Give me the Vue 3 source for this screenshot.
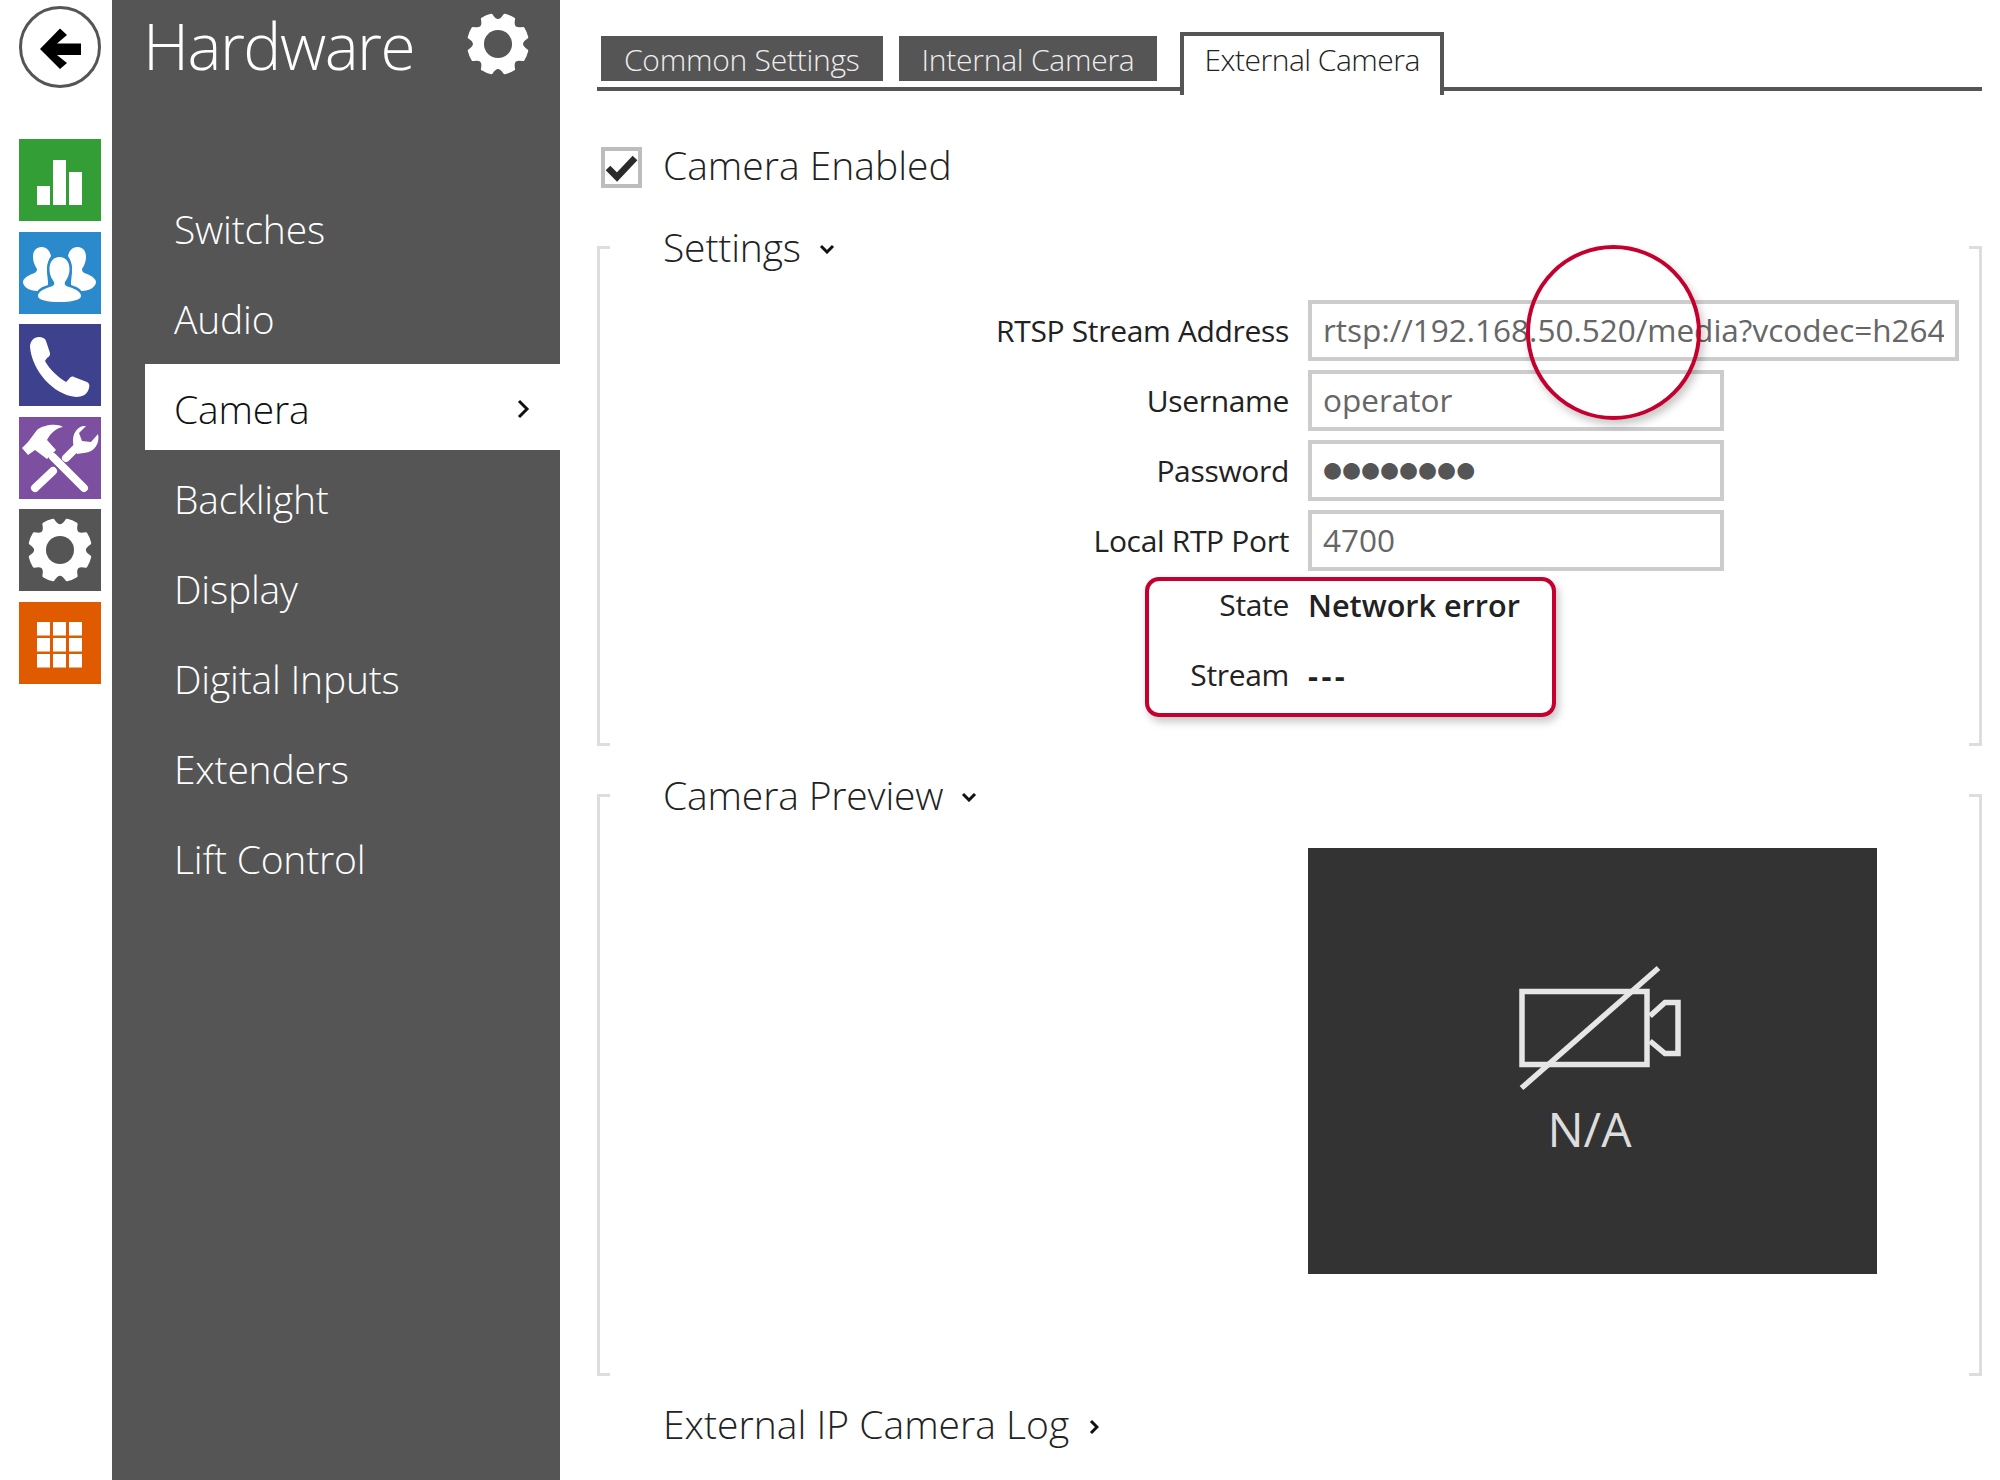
<script setup>
const tiles = ['green', 'blue', 'navy', 'purple', 'gray', 'orange']
const menu = ['Switches', 'Audio', 'Camera', 'Backlight', 'Display', 'Digital Inputs', 'Extenders', 'Lift Control']
const grid = [18, 34, 50].flatMap((x) => [20, 36, 52].map((y) => ({ x, y })))

function gearPath() {
  const R = 30.5, N = 19, d = (13 * Math.PI) / 180
  let p = ''
  for (let k = 0; k < 8; k++) {
    const t = (k * Math.PI) / 4 - Math.PI / 2
    const a = [32 + R * Math.cos(t - d), 32 + R * Math.sin(t - d)]
    const c = [32 + N * Math.cos(t), 32 + N * Math.sin(t)]
    const b = [32 + R * Math.cos(t + d), 32 + R * Math.sin(t + d)]
    p += k === 0 ? `M${a[0].toFixed(2)} ${a[1].toFixed(2)}` : `A${R} ${R} 0 0 1 ${a[0].toFixed(2)} ${a[1].toFixed(2)}`
    p += `Q${c[0].toFixed(2)} ${c[1].toFixed(2)} ${b[0].toFixed(2)} ${b[1].toFixed(2)}`
  }
  const s = (-Math.PI / 2) - d
  return p + `A${R} ${R} 0 0 1 ${(32 + R * Math.cos(s)).toFixed(2)} ${(32 + R * Math.sin(s)).toFixed(2)}Z`
}
const gear = gearPath()
</script>

<template>
  <div class="page">
    <nav class="rail">
      <div class="back">
        <svg viewBox="0 0 76 76" width="76" height="76"><polygon points="18,40 38,19.500 45,26 35,34.500 59,34.500 59,46 35,46 45,54 38,60" fill="#000" /></svg>
      </div>
      <div class="tiles">
        <div v-for="t in tiles" :key="t" class="tile" :class="t">
          <svg v-if="t === 'green'" viewBox="0 0 82 82">
            <rect x="18" y="47" width="13" height="19" /><rect x="34" y="21" width="13" height="45" /><rect x="50" y="33" width="13" height="33" />
          </svg>
          <svg v-else-if="t === 'blue'" viewBox="0 0 82 82">
            <path d="M22.500 15C17 15 14 19 14 25C14 30 16 34 18 37C18 39 17 41 13 42C8 44 4 47 4 50C4 55 11 59 18 59C22 59 26 58 29 56L29 50L28 40C28 34 29 28 32 24C31 19 28 15 22.500 15Z" />
            <path d="M58.500 15C64 15 67 19 67 25C67 30 65 34 63 37C63 39 64 41 68 42C73 44 77 47 77 50C77 55 70 59 63 59C59 59 55 58 52 56L52 50L53 40C53 34 52 28 49 24C50 19 53 15 58.500 15Z" />
            <path class="person" d="M40.500 25C34 25 30.500 30 30.500 37C30.500 43 33 47 35 50C36 53 34 54 31 55C24 57 19 60 19 64C19 68 29 70 40.500 70C52 70 62 68 62 64C62 60 57 57 50 55C47 54 45 53 46 50C48 47 50.500 43 50.500 37C50.500 30 47 25 40.500 25Z" />
          </svg>
          <svg v-else-if="t === 'navy'" viewBox="0 0 82 82">
            <path d="M11 23C11 17 15 13 20 13C23 13 26 14 27 17L31 29C31.500 31 30 33 28 34L26 37C31 46 39 53 47 58L50 55C51 53 53 52 55 53L68 58C70 59 71 61 70 64C69 69 65 73 57 73C34 71 13 46 11 23Z" />
          </svg>
          <svg v-else-if="t === 'purple'" viewBox="0 0 82 82">
            <path d="M3 31L9 38L16 33L28 42L37 33L28 23C32 15 38 11 44 10C38 6 24 8 18 13L9 25Z" />
            <path class="bar" d="M34 40L65 71" />
            <path class="bar" d="M16 71L34 54" />
            <path class="bar" d="M47 41L58 30" />
            <path d="M55 30C52 20 56 11 64 9L67 9L60 16L63 24L72 25L79 17C81 26 76 35 65 36C62 36 60 37 58 37Z" />
          </svg>
          <svg v-else-if="t === 'gray'" viewBox="0 0 82 82">
            <g transform="translate(9 9)"><path class="gear" :d="gear" /><circle cx="32" cy="32" r="14" fill="#555" /></g>
          </svg>
          <svg v-else viewBox="0 0 82 82">
            <rect v-for="c in grid" :key="c.x + '-' + c.y" :x="c.x" :y="c.y" width="13" height="13.5" />
          </svg>
        </div>
      </div>
    </nav>

    <aside class="sidebar">
      <header class="side-head">
        <h1>Hardware</h1>
        <svg class="side-gear" viewBox="0 0 64 64"><path class="gear" :d="gear" /><circle cx="32" cy="32" r="14.500" fill="#555" /></svg>
      </header>
      <ul class="menu">
        <li v-for="m in menu" :key="m" :class="{ active: m === 'Camera' }">
          <span>{{ m }}</span>
          <svg v-if="m === 'Camera'" class="chev-r" viewBox="0 0 14 22"><path d="M3 3l8 8-8 8" /></svg>
        </li>
      </ul>
    </aside>

    <main class="main">
      <div class="tabs">
        <div class="tab">Common Settings</div>
        <div class="tab">Internal Camera</div>
        <div class="tab current">External Camera</div>
      </div>

      <label class="check">
        <span class="box"><svg viewBox="0 0 41 41"><path d="M7 21l9 9 18-19" /></svg></span>
        <span class="check-text">Camera Enabled</span>
      </label>

      <section class="sec first">
        <h2>Settings <svg class="chev-d" viewBox="0 0 16 10"><path d="M2 2l6 6 6-6" /></svg></h2>
        <div class="form">
          <label>RTSP Stream Address</label>
          <input class="long" readonly value="rtsp://192.168.50.520/media?vcodec=h264" />
          <label>Username</label>
          <input readonly value="operator" />
          <label>Password</label>
          <input class="dots" readonly value="●●●●●●●●" />
          <label>Local RTP Port</label>
          <input readonly value="4700" />
          <label class="st">State</label>
          <div class="st strong">Network error</div>
          <label class="st">Stream</label>
          <div class="st dashes">---</div>
        </div>
      </section>

      <section class="sec second">
        <h2>Camera Preview <svg class="chev-d" viewBox="0 0 16 10"><path d="M2 2l6 6 6-6" /></svg></h2>
        <div class="preview">
          <svg viewBox="0 0 180 130" width="180" height="130">
            <rect x="19" y="28.500" width="125" height="73" class="cam" />
            <path class="cam" d="M147 53L162 39.500H175V90.500H162L147 78" />
            <path class="cam" d="M18.500 125L155.500 5" />
          </svg>
          <div class="na">N/A</div>
        </div>
      </section>

      <h2 class="log">External IP Camera Log <svg class="chev-rs" viewBox="0 0 10 16"><path d="M2 2l6 6-6 6" /></svg></h2>
    </main>

    <div class="note-circle"></div>
    <div class="note-rect"></div>
  </div>
</template>

<style scoped>
.page {
  position: relative;
  display: flex;
  width: 2000px;
  height: 1480px;
  overflow: hidden;
  background: #fff;
  font-family: "Open Sans", "Liberation Sans", sans-serif;
  color: #222;
}

/* rail */
.rail {
  width: 112px;
  flex: none;
  padding: 6px 0 0 19px;
  box-sizing: border-box;
}
.back {
  width: 82px;
  height: 82px;
  box-sizing: border-box;
  border: 3px solid #555;
  border-radius: 50%;
}
.back svg { display: block; }
.tiles {
  margin-top: 51px;
  display: flex;
  flex-direction: column;
  gap: 10.6px;
}
.tile { width: 82px; height: 82px; }
.tile svg { display: block; width: 82px; height: 82px; fill: #fff; }
.green { background: #339e35; }
.blue { background: #2b8acb; }
.navy { background: #3e418d; }
.purple { background: #7d4fa0; }
.gray { background: #555; }
.orange { background: #e05a00; }
.person { stroke: #2b8acb; stroke-width: 5; paint-order: stroke; }
.bar { fill: none; stroke: #fff; stroke-width: 8; stroke-linecap: round; }
.gear { fill: #fff; stroke: #fff; stroke-width: 3; stroke-linejoin: round; }

/* sidebar */
.sidebar {
  width: 448px;
  flex: none;
  background: #555;
  color: #fff;
}
.side-head {
  height: 184px;
  box-sizing: border-box;
  display: flex;
  align-items: flex-start;
  justify-content: space-between;
  padding: 0 31px 0 31px;
}
h1 {
  margin: 2px 0 0;
  font-size: 64px;
  font-weight: 300;
  line-height: 88px;
  letter-spacing: -1.5px;
}
.side-gear { width: 62px; height: 62px; margin-top: 13px; }
.menu {
  list-style: none;
  margin: 0;
  padding: 0 0 0 33px;
}
.menu li {
  height: 86px;
  margin-bottom: 4px;
  box-sizing: border-box;
  display: flex;
  align-items: center;
  justify-content: space-between;
  padding: 3px 30px 0 29px;
  font-size: 39px;
  font-weight: 300;
  letter-spacing: -0.2px;
}
.menu li.active { background: #fff; color: #111; }
.chev-r { width: 14px; height: 22px; }
.chev-r path, .chev-d path, .chev-rs path { fill: none; stroke: #111; stroke-width: 3; }

/* main */
.main {
  flex: 1;
  min-width: 0;
  padding: 0 18px 0 37px;
}
.tabs {
  height: 91px;
  box-sizing: border-box;
  border-bottom: 4px solid #555;
  display: flex;
  align-items: flex-start;
  gap: 16px;
  padding: 36px 0 0 4px;
}
.tab {
  height: 45px;
  padding: 0 23px;
  background: #555;
  color: #eee;
  font-size: 30px;
  font-weight: 300;
  line-height: 47px;
  letter-spacing: -0.25px;
}
.tab.current {
  height: 59px;
  margin: -4px 0 0 7px;
  padding: 0 20px;
  background: #fff;
  color: #222;
  border: 4px solid #555;
  border-bottom: 0;
  line-height: 47px;
  letter-spacing: -0.5px;
}
.check {
  display: flex;
  align-items: center;
  gap: 21px;
  margin: 56px 0 38px 4px;
  height: 41px;
  font-size: 39px;
  font-weight: 300;
}
.check-text { margin-bottom: 6px; }
.box {
  width: 41px;
  height: 41px;
  box-sizing: border-box;
  border: 4px solid #bdbdbd;
  position: relative;
}
.box svg { position: absolute; left: -4px; top: -4px; width: 41px; height: 41px; }
.box path { fill: none; stroke: #2a2a2a; stroke-width: 6.5; }

.sec { position: relative; }
.sec::before, .sec::after {
  content: "";
  position: absolute;
  top: 20px;
  bottom: 0;
  width: 10px;
  border: 3px solid #ddd;
}
.sec::before { left: 0; border-right: 0; }
.sec::after { right: 0; border-left: 0; }
.first { padding-bottom: 35px; }
.second { margin-top: 28px; padding-bottom: 102px; }
h2 {
  margin: 0;
  height: 50px;
  padding-left: 66px;
  font-size: 39px;
  font-weight: 300;
  line-height: 42px;
  letter-spacing: -0.15px;
}
.sec h2 { margin-bottom: 24px; }
.chev-d { width: 16px; height: 10px; margin-left: 8px; vertical-align: 8px; }
.chev-rs { width: 10px; height: 16px; margin-left: 10px; vertical-align: 4px; }

.form {
  display: grid;
  grid-template-columns: 692px 1fr;
  column-gap: 19px;
  grid-auto-rows: 61px;
  row-gap: 9px;
  align-items: center;
  font-size: 30px;
}
.form label { text-align: right; letter-spacing: -0.33px; }
.form input {
  width: 416px;
  height: 61px;
  box-sizing: border-box;
  border: 4px solid #ccc;
  padding: 0 11px 2px;
  outline: 0;
  color: #666;
  font: inherit;
  font-size: 31.5px;
}
.form input.long { width: 651px; }
.form input.dots {
  color: #555;
  font-family: "DejaVu Sans", sans-serif;
  font-size: 21.8px;
}
.st { align-self: start; line-height: 50px; }
.strong { font-weight: 600; font-size: 30.6px; }
.dashes { font-size: 31px; font-weight: 700; letter-spacing: 3.4px; }

.preview {
  margin-left: 711px;
  width: 569px;
  height: 426px;
  background: #333;
  display: flex;
  flex-direction: column;
  align-items: center;
  padding-top: 115px;
  box-sizing: border-box;
}
.cam { fill: none; stroke: #e6e6e6; stroke-width: 5.5; }
.na { color: #ddd; font-size: 48px; line-height: 50px; margin: 11px 6px 0 0; }
.log { margin-top: 27px; letter-spacing: 0.02px; }

/* annotations over content */
.note-circle {
  position: absolute;
  left: 1526px;
  top: 245px;
  width: 175px;
  height: 175px;
  box-sizing: border-box;
  border: 4px solid #c4002f;
  border-radius: 50%;
  box-shadow: 3px 5px 8px rgba(0, 0, 0, 0.22);
}
.note-rect {
  position: absolute;
  left: 1145px;
  top: 577px;
  width: 411px;
  height: 140px;
  box-sizing: border-box;
  border: 4px solid #c4002f;
  border-radius: 14px;
  box-shadow: 3px 5px 8px rgba(0, 0, 0, 0.22);
}
</style>
